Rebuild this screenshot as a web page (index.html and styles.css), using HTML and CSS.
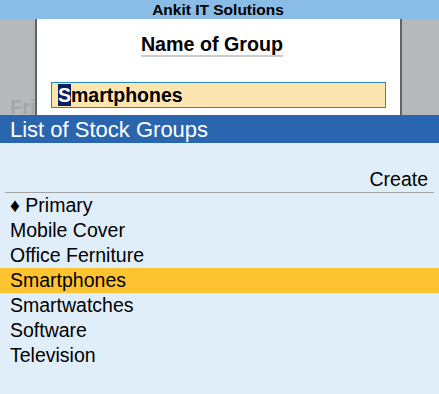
FILE: index.html
```html
<!DOCTYPE html>
<html lang="en">
<head>
  <meta charset="UTF-8" />
  <title>Stock Group Creation</title>
  <link rel="stylesheet" href="styles.css">
</head>
<body>
  <div class="titlebar">Ankit IT Solutions</div>

  <div class="stage">
    <div class="side side-left"><span class="ghost">Fri</span></div>
    <div class="panel">
      <div class="panel-title"><span>Name of Group</span></div>
      <div class="name-input"><span class="cursor">S</span>martphones</div>
    </div>
    <div class="side side-right"></div>
  </div>

  <div class="list-head">List of Stock Groups</div>

  <div class="list-body">
    <div class="list-action">Create</div>
    <ul class="groups">
      <li>&#9830; Primary</li>
      <li>Mobile Cover</li>
      <li>Office Ferniture</li>
      <li class="selected">Smartphones</li>
      <li>Smartwatches</li>
      <li>Software</li>
      <li>Television</li>
    </ul>
  </div>
</body>
</html>
```

FILE: styles.css
```css
html, body {
  margin: 0;
  height: 100%;
}
body {
  font-family: "Liberation Sans", Arial, sans-serif;
  color: #000;
  background-color: #e0eef9;
  display: flex;
  flex-direction: column;
}
.titlebar {
  height: 19px;
  line-height: 19px;
  background-color: #89bde6;
  text-align: center;
  font-weight: bold;
  font-size: 15.5px;
  padding-right: 3px;
}
.stage {
  display: flex;
  height: 96px;
  background-color: #b6b9bc;
  border-bottom: 1px solid #5c5c5c;
}
.side-left {
  width: 35px;
  position: relative;
  overflow: hidden;
}
.side-right {
  width: 37px;
}
.ghost {
  position: absolute;
  left: 10px;
  top: 80px;
  font-weight: bold;
  font-size: 20px;
  line-height: 16px;
  height: 16px;
  color: #a4a7aa;
  white-space: nowrap;
}
.panel {
  flex: 1;
  background-color: #fff;
  border-left: 2px solid #636363;
  border-right: 2px solid #636363;
  padding: 0 14px;
}
.panel-title {
  text-align: center;
  padding-top: 14px;
  padding-right: 13px;
}
.panel-title span {
  display: inline-block;
  font-weight: bold;
  font-size: 19.7px;
  line-height: 22px;
  border-bottom: 2px solid #cccccc;
}
.name-input {
  margin-top: 25px;
  height: 24px;
  line-height: 24px;
  border: 1px solid #2389c6;
  background-color: #fde5b0;
  padding-left: 6px;
  font-weight: bold;
  font-size: 19.5px;
}
.cursor {
  background-color: #0c1f5c;
  color: #fff;
}
.list-head {
  height: 27px;
  line-height: 27px;
  background-color: #2a66b0;
  color: #fff;
  font-size: 22px;
  padding-left: 10px;
}
.list-body {
  flex: 1;
}
.list-action {
  margin: 0 5px;
  padding: 26px 6px 3px 0;
  text-align: right;
  font-size: 19.5px;
  line-height: 20px;
  border-bottom: 1px solid #a3a3a3;
}
.groups {
  list-style: none;
  margin: 0;
  padding: 0;
}
.groups li {
  height: 25px;
  line-height: 25px;
  padding-left: 10px;
  font-size: 19.5px;
}
.groups li.selected {
  background-color: #fdc330;
}
```
